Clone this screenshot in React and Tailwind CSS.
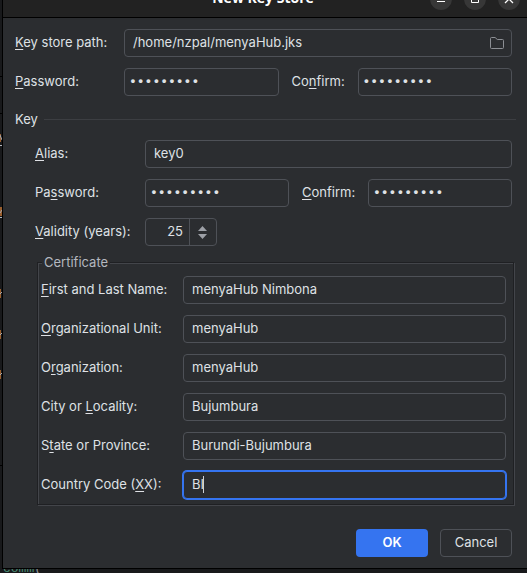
import React from "react";

const inputBase =
  "block h-7 w-full min-w-0 rounded-[4px] border border-[#4e5157] bg-[#2b2d30] px-2 pb-[2px] text-[13px] leading-4 text-[#dfe1e5] outline-none";

function Mnemonic({ text, at }) {
  return (
    <>
      {text.slice(0, at)}
      <span className="underline decoration-1 underline-offset-2 [text-decoration-skip-ink:none]">{text[at]}</span>
      {text.slice(at + 1)}
    </>
  );
}

function Label({ id, text, at, className }) {
  return (
    <label htmlFor={id} className={"shrink-0 whitespace-nowrap pb-[2px] leading-4 " + className}>
      <Mnemonic text={text} at={at} />
    </label>
  );
}

function Field({ id, type = "text", value }) {
  return <input id={id} type={type} defaultValue={value} className={inputBase} />;
}

function PasswordField({ id }) {
  return (
    <input
      id={id}
      type="password"
      defaultValue="menyahub1"
      className="block h-7 w-full min-w-0 rounded-[4px] border border-[#4e5157] bg-[#2b2d30] px-1 pb-[2px] font-['Liberation_Mono',monospace] text-[13px] font-bold text-[#dfe1e5] outline-none"
    />
  );
}

const certificate = [
  { id: "name", text: "First and Last Name:", at: 0, value: "menyaHub Nimbona" },
  { id: "unit", text: "Organizational Unit:", at: 0, value: "menyaHub" },
  { id: "org", text: "Organization:", at: 1, value: "menyaHub" },
  { id: "city", text: "City or Locality:", at: 8, value: "Bujumbura" },
  { id: "state", text: "State or Province:", at: 1, value: "Burundi-Bujumbura" },
];

function TitleBar() {
  const round = "flex size-[22px] items-center justify-center rounded-full bg-[#373737] text-white";
  return (
    <header className="flex h-[18px] items-end overflow-hidden border-b border-black bg-[#222222] pr-[7px] pb-[7px]">
      <div className="w-[93px] shrink-0" />
      <h1 className="flex-1 whitespace-nowrap pb-[3px] text-center font-['Open_Sans',sans-serif] text-[14px] leading-[18px] font-bold text-white">
        New Key Store
      </h1>
      <div className="flex gap-3">
        <button type="button" aria-label="Minimize" className={round}>
          <svg viewBox="0 0 22 22" className="size-[22px]"><path d="M7 13.500h8" stroke="currentColor" fill="none" /></svg>
        </button>
        <button type="button" aria-label="Maximize" className={round}>
          <svg viewBox="0 0 22 22" className="size-[22px]"><path d="M7.500 7.500h7v7h-7z" stroke="currentColor" fill="none" /></svg>
        </button>
        <button type="button" aria-label="Close" className={round}>
          <svg viewBox="0 0 22 22" className="size-[22px]"><path d="M7 7l8 8M15 7l-8 8" stroke="currentColor" strokeWidth="1.3" fill="none" /></svg>
        </button>
      </div>
    </header>
  );
}

function EditorEdge() {
  return (
    <svg aria-hidden="true" viewBox="0 0 2 573" className="absolute top-0 left-0 h-[573px] w-[2px]">
      <path d="M0 76.500h2M0 113.500h2M0 465.500h2" stroke="#000000" />
      <path d="M0 134h1v8h-1zM0 207h2v9h-2zM0 289h1v9h-1zM0 330h1v9h-1zM0 370h1v9h-1z" fill="#9a5f2e" />
      <path d="M0 135l2 5M0 213l2-3M0 294l2-2M0 335l2-2M0 375l2-2" stroke="#a9a9ad" />
      <path d="M0 145.500h2M0 217.500h2" stroke="#b4b8bf" />
    </svg>
  );
}

export default function App() {
  return (
    <div className="relative flex min-h-screen flex-col overflow-hidden bg-[#18191b] pl-[2px] font-[Inter,sans-serif] text-[13px] text-[#dfe1e5]">
      <EditorEdge />
      <main className="border-b border-l border-black bg-[#2b2d30]">
        <TitleBar />
        <form className="pr-[15px] pb-[11px] pl-3" onSubmit={(e) => e.preventDefault()}>
          <div className="flex flex-col gap-[11px] pt-[11px]">
            <div className="flex items-center">
              <Label id="path" text="Key store path:" at={0} className="w-[109px]" />
              <div className="relative flex-1">
                <Field id="path" value="/home/nzpal/menyaHub.jks" />
                <button type="button" aria-label="Browse" className="absolute top-[6px] right-[7px] text-[#8c8f94]">
                  <svg viewBox="0 0 16 16" className="size-4" fill="none" stroke="currentColor">
                    <path d="M1.500 3.500a1 1 0 0 1 1-1h3.600l2.200 2h5.200a1 1 0 0 1 1 1v7a1 1 0 0 1-1 1h-11a1 1 0 0 1-1-1z" />
                  </svg>
                </button>
              </div>
            </div>
            <div className="flex items-center">
              <Label id="pw" text="Password:" at={0} className="w-[109px]" />
              <div className="flex-1"><PasswordField id="pw" /></div>
              <Label id="pw2" text="Confirm:" at={2} className="w-[79px] pl-[13px]" />
              <div className="flex-1"><PasswordField id="pw2" /></div>
            </div>
          </div>

          <div className="mt-[15px] -mr-1 flex items-center gap-[6px]">
            <h2 className="leading-4">Key</h2>
            <div className="h-px flex-1 bg-[#3c3e42]" />
          </div>

          <div className="mt-[13px] flex flex-col gap-[11px] pl-5">
            <div className="flex items-center">
              <Label id="alias" text="Alias:" at={0} className="w-[110px]" />
              <Field id="alias" value="key0" />
            </div>
            <div className="flex items-center">
              <Label id="kpw" text="Password:" at={2} className="w-[110px]" />
              <div className="flex-1"><PasswordField id="kpw" /></div>
              <Label id="kpw2" text="Confirm:" at={0} className="w-[79px] pl-[13px]" />
              <div className="flex-1"><PasswordField id="kpw2" /></div>
            </div>
            <div className="flex items-center">
              <Label id="years" text="Validity (years):" at={0} className="w-[110px]" />
              <div className="flex h-7 w-[72px] overflow-hidden rounded-[4px] border border-[#4e5157]">
                <input
                  id="years"
                  type="text"
                  inputMode="numeric"
                  defaultValue="25"
                  className="w-0 flex-1 bg-transparent pr-[6px] text-right outline-none"
                />
                <div className="flex w-[27px] flex-col items-center justify-center gap-[3px] border-l border-[#4e5157] pr-px text-[#9da0a6]">
                  <button type="button" aria-label="Increase">
                    <svg viewBox="0 0 9 5" className="block h-[5px] w-[9px]"><path d="M4.500 0L9 5H0z" fill="currentColor" /></svg>
                  </button>
                  <button type="button" aria-label="Decrease">
                    <svg viewBox="0 0 9 5" className="block h-[5px] w-[9px]"><path d="M0 0h9L4.500 5z" fill="currentColor" /></svg>
                  </button>
                </div>
              </div>
            </div>
          </div>

          <fieldset className="mt-2 -mr-[2px] ml-[22px] border border-[#1f2023] pr-[7px] pb-[5px] pl-[3px] shadow-[1px_1px_0_#43454a,inset_1px_1px_0_#43454a]">
            <legend className="ml-[1px] bg-[#2b2d30] px-[2px] leading-4 text-[#b4b8bf]">Certificate</legend>
            <div className="flex flex-col gap-[11px] pt-[6px]">
              {certificate.map((f) => (
                <div key={f.id} className="flex items-center">
                  <Label id={f.id} text={f.text} at={f.at} className="w-[142px]" />
                  <Field id={f.id} value={f.value} />
                </div>
              ))}
              <div className="flex items-center">
                <Label id="country" text="Country Code (XX):" at={14} className="w-[142px]" />
                <div className="relative flex-1">
                  <input
                    id="country"
                    type="text"
                    defaultValue="BI"
                    className="block h-7 w-full rounded-[4px] border border-[#3574f0] bg-[#2b2d30] px-2 pb-[2px] text-[13px] leading-4 text-[#dfe1e5] ring-1 ring-[#3574f0] outline-none"
                  />
                  <span className="absolute top-[5px] left-5 h-[17px] w-px bg-[#ced0d6]" />
                </div>
              </div>
            </div>
          </fieldset>

          <div className="mt-6 flex justify-end gap-3">
            <button type="submit" className="h-7 w-[72px] rounded-[4px] bg-[#3574f0] font-semibold text-white">OK</button>
            <button type="button" className="h-7 w-[72px] rounded-[4px] border border-[#4e5157]">Cancel</button>
          </div>
        </form>
      </main>
      <div className="h-1 overflow-hidden pl-px">
        <div className="-mt-[7px] font-['Liberation_Mono',monospace] leading-[14px] text-[#4a8a72]">comm<span className="text-[#8c8f94]">(</span></div>
      </div>
    </div>
  );
}
